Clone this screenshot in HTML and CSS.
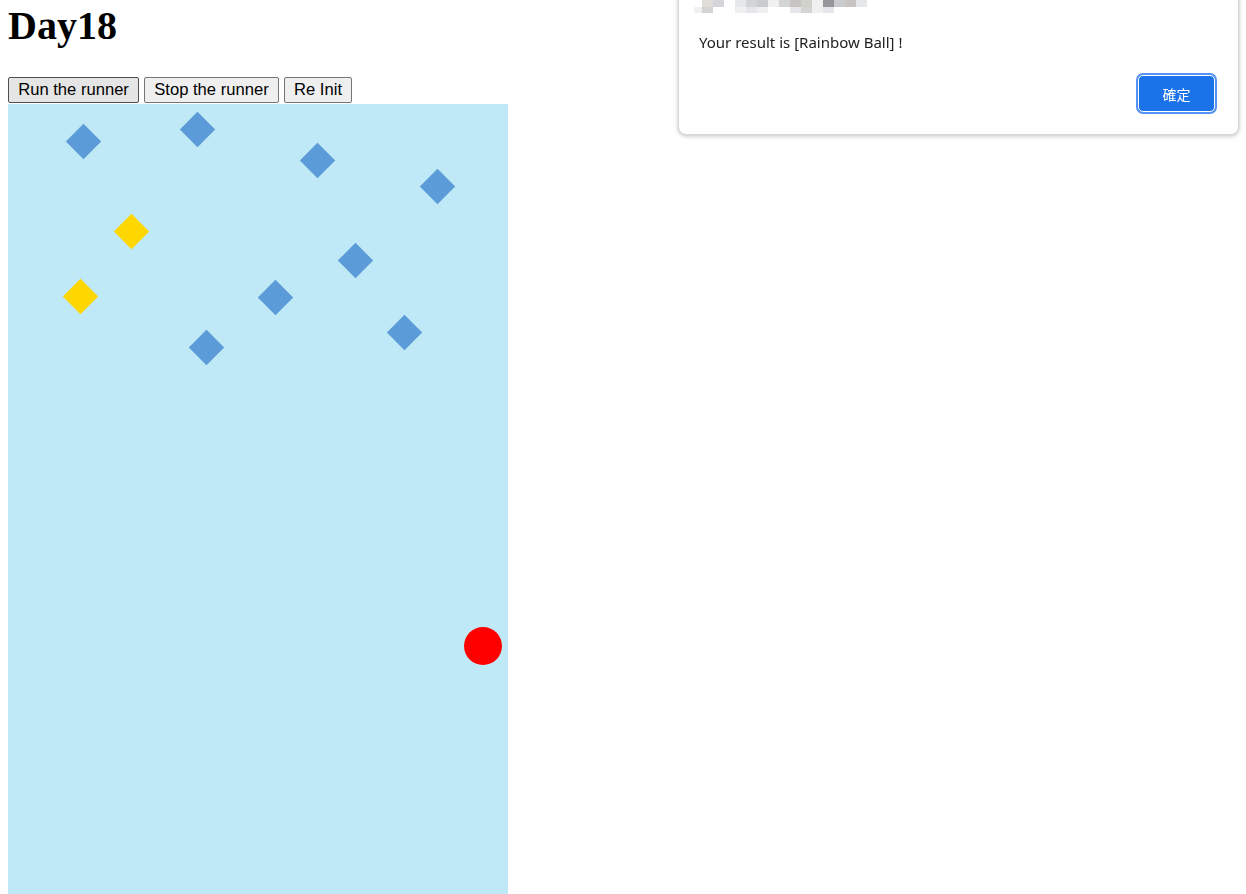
FILE: index.html
```html
<!DOCTYPE html>
<html>
<head>
<meta charset="utf-8">
<title>Day18</title>
<link rel="stylesheet" href="styles.css">
</head>
<body>
<h1 class="title">Day18</h1>
<div class="controls">
  <button class="btn btn-active">Run the runner</button>
  <button class="btn">Stop the runner</button>
  <button class="btn">Re Init</button>
</div>
<div class="stage">
  <div class="gem blue" style="left:62.5px;top:25.2px"></div>
  <div class="gem blue" style="left:177.2px;top:12.5px"></div>
  <div class="gem blue" style="left:297px;top:43.5px"></div>
  <div class="gem blue" style="left:416.5px;top:69.5px"></div>
  <div class="gem gold" style="left:111px;top:114.5px"></div>
  <div class="gem blue" style="left:334.5px;top:144px"></div>
  <div class="gem gold" style="left:59.5px;top:180px"></div>
  <div class="gem blue" style="left:254.5px;top:180.5px"></div>
  <div class="gem blue" style="left:383.5px;top:216px"></div>
  <div class="gem blue" style="left:185.5px;top:230.5px"></div>
  <div class="ball" style="left:456px;top:523px"></div>
</div>

<div class="dialog">
  <div class="origin">
    <div class="mrow">
      <span class="m w8"></span><span class="m c1"></span><span class="m c2"></span><span class="m c0"></span><span class="m c3"></span><span class="m c4"></span><span class="m c5"></span><span class="m c6"></span><span class="m c4"></span><span class="m c7"></span><span class="m c8"></span><span class="m c6"></span><span class="m c9"></span><span class="m c5"></span><span class="m c7"></span><span class="m c3"></span>
    </div>
    <div class="mrow">
      <span class="m w8 c6"></span><span class="m c4"></span><span class="m c0"></span><span class="m c0"></span><span class="m c6"></span><span class="m c3"></span><span class="m c6"></span><span class="m c0"></span><span class="m c0"></span><span class="m c3"></span><span class="m c4"></span><span class="m c6"></span><span class="m c3"></span><span class="m c0"></span>
    </div>
  </div>
  <p class="message">Your result is [Rainbow Ball] !</p>
  <div class="actions">
    <button class="ok">確定</button>
  </div>
</div>
</body>
</html>
```

FILE: styles.css
```css
html {
  overflow: hidden;
  background: #ffffff;
}

body {
  margin: 0 8px;
  font-family: "Liberation Serif", serif;
}

.title {
  margin: 4px 0 29px;
  font-family: "Liberation Serif", serif;
  font-weight: bold;
  font-size: 40px;
  line-height: 44px;
  color: #000;
}

.controls {
  display: flex;
  gap: 5px;
  height: 27px;
  align-items: flex-start;
}

.btn {
  height: 26px;
  padding: 0 9.2px;
  margin: 0;
  font-family: "Liberation Sans", Arial, sans-serif;
  font-size: 16.6px;
  color: #000;
  background: #efefef;
  border: 1px solid #767676;
  border-radius: 2px;
  line-height: 22px;
}

.btn-active {
  background: #e5e5e5;
  border-color: #4f4f4f;
}

.stage {
  position: relative;
  width: 500px;
  height: 800px;
  background: #bfe9f6;
}

.gem {
  position: absolute;
  width: 25px;
  height: 25px;
  transform: rotate(45deg);
}

.blue {
  background: #5b9bd8;
}

.gold {
  background: #ffd700;
}

.ball {
  position: absolute;
  width: 38px;
  height: 38px;
  border-radius: 50%;
  background: #ff0000;
}

.dialog {
  position: fixed;
  left: 678px;
  top: -20px;
  width: 518px;
  padding: 19px 21px 20px 20px;
  background: #fff;
  border: 1px solid #d6d6d6;
  border-radius: 8px;
  box-shadow: 0 1px 4px rgba(0, 0, 0, 0.25);
  font-family: "Noto Sans", "Open Sans", sans-serif;
}

.origin {
  height: 13px;
  margin-left: -5px;
}

.mrow {
  display: flex;
}

.mrow:first-child {
  height: 7px;
}

.mrow:last-child {
  height: 6px;
}

.m {
  display: block;
  width: 11px;
  height: 100%;
}

.w8 {
  width: 8px;
}

.c0 { background: #ffffff; }
.c1 { background: #e0ddd8; }
.c2 { background: #d5d6da; }
.c3 { background: #e6e7ea; }
.c4 { background: #d3d4d6; }
.c5 { background: #cacbce; }
.c6 { background: #f0f0f0; }
.c7 { background: #c7c4c2; }
.c8 { background: #d2d2cd; }
.c9 { background: #979699; }

.message {
  margin: 19px 0 0;
  font-size: 15px;
  line-height: 20px;
  color: #202124;
}

.actions {
  display: flex;
  justify-content: flex-end;
  margin-top: 21px;
  padding: 2px 2px;
}

.ok {
  width: 77px;
  height: 37px;
  margin: 0;
  padding: 0;
  background: #1a73e8;
  color: #fff;
  border: 1px solid #fff;
  border-radius: 5px;
  box-shadow: 0 0 0 2px #5592f5;
  font-family: "Noto Sans CJK TC", "Noto Sans", sans-serif;
  font-size: 14px;
}
```
